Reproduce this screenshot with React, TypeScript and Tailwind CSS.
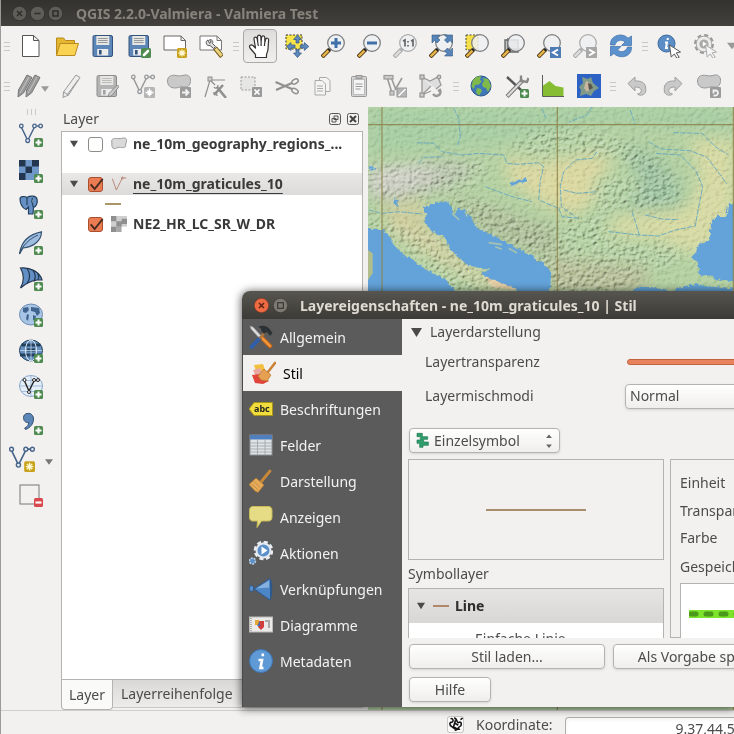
import { useState, type ReactNode } from "react";

function Svg(props: { children: ReactNode; className?: string }) {
  return (
    <svg
      aria-hidden="true"
      className={props.className ?? "h-6 w-6 shrink-0"}
      fill="none"
      viewBox="0 0 24 24"
    >
      {props.children}
    </svg>
  );
}

function PlusBadge() {
  return (
    <g>
      <rect fill="#4f8a4f" height="9" rx="1.5" width="9" x="15" y="15" />
      <path d="M19.5 16.5v6M16.5 19.5h6" stroke="#fff" strokeWidth="2" />
    </g>
  );
}

function StarBadge() {
  return (
    <g transform="translate(14 14)">
      <rect fill="#c9a21c" height="10" rx="1.5" width="10" />
      <path
        d="M5 1.5v7M1.5 5h7M2.5 2.5l5 5M7.5 2.5l-5 5"
        stroke="#fff8d0"
        strokeWidth="1.3"
      />
    </g>
  );
}

function GreyBadge(props: { d: string }) {
  return (
    <g>
      <rect fill="#9b9b9b" height="11" rx="1" width="11" x="13" y="13" />
      <path d={props.d} stroke="#f2f2f2" strokeWidth="1.8" />
    </g>
  );
}

function Lens(props: { grey?: boolean; children?: ReactNode }) {
  return (
    <g>
      <path
        d="M1 23l7.5-7.5"
        stroke={props.grey ? "#a5a5a5" : "#4c3a18"}
        strokeWidth="4.2"
      />
      <path
        d="M1.7 22.3l6-6"
        stroke={props.grey ? "#dcdcdc" : "#e9b548"}
        strokeWidth="2.4"
      />
      <path
        d="M7.5 16.5l2.5-2.5"
        stroke={props.grey ? "#b0b0b0" : "#222"}
        strokeWidth="3"
      />
      <circle
        cx="15"
        cy="9"
        fill="#eef0f2"
        fillOpacity="0.85"
        r="8.3"
        stroke={props.grey ? "#a9a9a9" : "#77797c"}
        strokeWidth="1.2"
      />
      {props.children}
    </g>
  );
}

function Floppy(props: { grey?: boolean }) {
  return (
    <g>
      <rect
        fill={props.grey ? "#b4b4b4" : "#5d86b8"}
        height="21"
        rx="1.5"
        stroke={props.grey ? "#8d8d8d" : "#34527a"}
        width="19.5"
        x="2"
        y="1.5"
      />
      <rect fill="#e6e6e2" height="9" width="13" x="5.3" y="2" />
      <path
        d="M7 4.5h9.6M7 6.5h9.6M7 8.5h9.6"
        stroke={props.grey ? "#b5b5b5" : "#8b8f94"}
        strokeWidth="0.9"
      />
      <rect fill="#ececec" height="6.5" width="11" x="6.2" y="15" />
      <rect
        fill={props.grey ? "#a2a2a2" : "#34527a"}
        height="4.5"
        width="2.6"
        x="8"
        y="16"
      />
    </g>
  );
}

function VectorNodes(props: { color: string }) {
  return (
    <g stroke={props.color} strokeWidth="1.5">
      <path d="M2.5 4.5l6 12.5M9 17l6.2-12.5M17.5 2.9h3" />
      <g fill="#e9eef4" strokeWidth="1.3">
        <circle cx="2.3" cy="3" r="1.8" />
        <circle cx="8.7" cy="17.6" r="1.9" />
        <circle cx="15.5" cy="3" r="1.8" />
        <circle cx="21.6" cy="3" r="1.8" />
      </g>
    </g>
  );
}

const BEAN =
  "M.5 7C.5 2 5 .5 9 1.500c4 1 6 0 9-.5 4-.5 6 3 5.500 6.500-.5 4-3 6-6.500 5.500-4-1-5 1-9 1-4.500 0-7.500-2.500-7.500-7z";

const GREY = "#999";

const fileIcons: [string, ReactNode][] = [
  [
    "Neu",
    <path
      d="M3.5 1.5h11l5.5 5v16H3.5zM14.5 1.5v5H20"
      fill="#fff"
      stroke="#555"
    />,
  ],
  [
    "Öffnen",
    <g stroke="#b98a1d" strokeLinejoin="round">
      <path d="M1.5 21V4h7l2 2.5h9V12" fill="#e5b731" />
      <path d="M1.5 21.5l3.5-12h18.5l-3.7 12z" fill="#fbd352" />
    </g>,
  ],
  ["Speichern", <Floppy />],
  [
    "Speichern als",
    <g>
      <Floppy />
      <rect fill="#4f8a4f" height="10" rx="1.5" width="10" x="14" y="14" />
      <path d="M17 21l4-4" stroke="#fff" strokeLinecap="round" strokeWidth="2.6" />
    </g>,
  ],
  [
    "Neue Druckzusammenstellung",
    <g>
      <path d="M1 2h17l4.5 4.5V16H1zM18 2v4.5h4.5" fill="#fff" stroke="#666" />
      <StarBadge />
    </g>,
  ],
  [
    "Druckzusammenstellungen",
    <g>
      <path d="M1 2h17l4.5 4.5V16H1zM18 2v4.5h4.5" fill="#fff" stroke="#777" />
      <path
        d="M9 6c-3.500 1.500-1.500 6.500 2 5.500l3.500 3 2-2-3-3c1-2.500-1-4.500-3-3.700l1.700 2.200-1.500 1.500z"
        fill="#ddd"
        stroke="#444"
        strokeWidth="0.9"
      />
      <path d="M16 14l7 8.500" stroke="#6a5318" strokeWidth="4.8" />
      <path d="M16.6 14.6l6 7.200" stroke="#ecd47c" strokeWidth="3" />
    </g>,
  ],
];

const navIcons: [string, ReactNode][] = [
  [
    "Karte verschieben",
    <path
      d="M7.500 23.500v-3L2 14c-1.500-2.500 1-4 3-2.500L7.500 14 6 5c-.3-2.300 2.600-2.700 3.100-.5L9.700 8 9.500 3c0-2.500 3.100-2.500 3.300 0l.3 5 .5-4.500c.2-2.200 3.200-2 3.200.2V8.500l.8-3c.5-2 3.200-1.500 3 .5L20 15c-.1 2.500-1 3.500-1.500 5.500v3zM9.700 8l.6 4M13.100 8v4M16.800 8.500l-.4 3.500"
      fill="#fff"
      stroke="#333"
      strokeLinejoin="round"
      strokeWidth="1.2"
    />,
  ],
  [
    "Auswahl verschieben",
    <g>
      <rect fill="#f8e54a" height="14" stroke="#333" strokeDasharray="2 1.5" width="16" x="1" y="1" />
      <path
        d="M12.5 1l4 4.5H14V9h-3V5.5H8.5zM12.5 23.5l4-4.5H14v-3.5h-3V19H8.5zM1.5 12.5l4.5-4V11h4v3H6v2.5zM23.8 12.5l-4.5-4V11h-4v3h4v2.5z"
        fill="#5d89bd"
        stroke="#2f5582"
        strokeWidth="0.7"
      />
    </g>,
  ],
  [
    "Hineinzoomen",
    <Lens>
      <path d="M15 4v10M10 9h10" stroke="#3f70aa" strokeWidth="3" />
    </Lens>,
  ],
  [
    "Hinauszoomen",
    <Lens>
      <path d="M10 9h10" stroke="#3f70aa" strokeWidth="3" />
    </Lens>,
  ],
  [
    "Zoom 1:1",
    <Lens grey>
      <path
        d="M10 7l2-1v6.5M18 7l2-1v6.5M15 7v1.5M15 11v1.5"
        stroke="#666"
        strokeWidth="1.7"
      />
    </Lens>,
  ],
  [
    "Volle Ausdehnung",
    <g>
      <Lens />
      <path
        d="M3 1h8L8.5 3.5 11 6 8 9 5.5 6.5 3 9zM23.5 1h-8L18 3.5 15.5 6l3 3L21 6.5 23.5 9zM23.5 22h-8l2.5-2.5-2.5-2.5 3-3 2.5 2.5 2.5-2.5z"
        fill="#5784b8"
        stroke="#34597f"
        strokeWidth="0.6"
      />
    </g>,
  ],
  [
    "Zur Auswahl zoomen",
    <g>
      <rect fill="#f6e04a" height="15" stroke="#444" strokeDasharray="2 1.5" width="12" x="1" y="1" />
      <Lens />
    </g>,
  ],
  [
    "Auf den Layer zoomen",
    <g>
      <path d="M4 6v12h13V6zM7 4v11h13" fill="#c4c4c2" stroke="#666" strokeWidth="1.4" />
      <Lens />
    </g>,
  ],
  [
    "Zoom zurück",
    <g>
      <Lens />
      <rect fill="#4d7db4" height="11" width="11" x="13" y="13" />
      <path d="M21 15.5l-5 3 5 3" stroke="#fff" strokeWidth="2" />
    </g>,
  ],
  [
    "Zoom vor",
    <g>
      <Lens grey />
      <rect fill="#a8a8a8" height="11" width="11" x="13" y="13" />
      <path d="M16 15.5l5 3-5 3" stroke="#fff" strokeWidth="2" />
    </g>,
  ],
  [
    "Aktualisieren",
    <g fill="#5b92cd" stroke="#3c6fa8" strokeWidth="0.7">
      <path d="M1.5 11C1 4 7 .8 12 1c3 .2 5.5 1.5 7 3.2L22.5 2v9.5h-10L16 8C12 4.5 7 7 6 11z" />
      <path d="M22.500 13c.5 7-5.500 10.200-10.500 9.700-3-.2-5.500-1.500-7-3.200L1.500 22v-9.500H12L8.500 16c4 3.500 9 1 10-3z" />
    </g>,
  ],
];

const CURSOR = "M12.5 11l11 7-4.3.9 3 4.3-2.2 1.3-2.7-4.5-3.1 3z";

const infoIcons: [string, ReactNode][] = [
  [
    "Objekte abfragen",
    <g>
      <circle cx="9.5" cy="9.5" fill="#5b8dc6" r="8.5" stroke="#3c6798" />
      <path d="M10.7 4v2M8 8.5h2L9 14h2" stroke="#fff" strokeWidth="2" />
      <path d={CURSOR} fill="#fff" stroke="#555" />
    </g>,
  ],
  [
    "Objektaktion ausführen",
    <g>
      <circle cx="11" cy="10" r="8.8" stroke="#999" strokeDasharray="4 2.9" strokeWidth="2.4" />
      <circle cx="11" cy="10" fill="#ececea" r="7.8" stroke="#aaa" />
      <circle cx="11" cy="10" fill="#aaa" r="4.6" />
      <path d="M9.8 7.5l4 2.5-4 2.5z" fill="#fff" />
      <path d={CURSOR} fill="#f4f4f4" stroke="#aaa" />
    </g>,
  ],
];

const editIcons: [string, ReactNode][] = [
  [
    "Bearbeitungsstatus umschalten",
    <g fill="#eee" stroke={GREY}>
      <path d="M17 1l4 2.5L9.5 21 4 23.5 4.5 18zM4.5 18l5 3M19 6L8 21" />
    </g>,
  ],
  [
    "Layeränderungen speichern",
    <g>
      <Floppy grey />
      <path d="M22.5 11l1.5 1.5-7 9-3.5 1.5.5-3.5z" fill="#ccc" stroke="#888" />
    </g>,
  ],
  [
    "Objekt hinzufügen",
    <g>
      <VectorNodes color={GREY} />
      <rect fill="#b5b5b5" height="11" rx="1.5" width="11" x="13" y="13" />
      <path
        d="M18.5 14.5v8M14.5 18.5h8M16.5 16.5l4 4M20.5 16.5l-4 4"
        stroke="#fff"
        strokeWidth="1.3"
      />
    </g>,
  ],
  [
    "Objekte verschieben",
    <g>
      <path d={BEAN} fill="#c9c9c9" stroke={GREY} />
      <GreyBadge d="M15 18.5h6M18.5 15.5l3 3-3 3" />
    </g>,
  ],
  [
    "Knotenwerkzeug",
    <g stroke="#8f8f8f">
      <path d="M2 23L7 6h15M7 6l5 5" strokeWidth="1.2" />
      <rect fill="#ccc" height="4" width="4" x="5" y="3" />
      <path d="M11 21l9-10M14 13l9 11" strokeWidth="2.6" />
      <path d="M11 13c1 2 4 1 4-2M10 19c2-1 4 0 4 3" strokeWidth="1.3" />
    </g>,
  ],
  [
    "Ausgewähltes löschen",
    <g>
      <rect fill="#e6e6e4" height="13" stroke="#999" strokeDasharray="2 1.5" width="14" x="2" y="3" />
      <rect fill="#999" height="10" rx="1" width="10" x="13" y="13" />
      <path d="M15.5 15.5l5 5M20.5 15.5l-5 5" stroke="#fff" strokeWidth="1.7" />
    </g>,
  ],
  [
    "Ausschneiden",
    <g stroke="#909090" strokeWidth="1.5">
      <path d="M.5 8L17 15M1 16L17 9" strokeWidth="2.200" />
      <ellipse cx="20" cy="7.5" rx="3.4" ry="2.2" transform="rotate(-30 20 7.5)" />
      <ellipse cx="20" cy="17" rx="3.4" ry="2.2" transform="rotate(30 20 17)" />
    </g>,
  ],
  [
    "Kopieren",
    <g fill="#f4f4f2" stroke="#aaa">
      <path d="M8.5 3.5h7l3.5 3v11H8.5z" />
      <path d="M4 6.5h7l3.5 3.5v11H4zM6 12h6M6 14.5h6M6 17h6" />
    </g>,
  ],
  [
    "Einfügen",
    <g stroke="#999">
      <rect fill="#d4d4d4" height="20" rx="1" width="15" x="4.5" y="2.5" />
      <rect fill="#f5f5f5" height="15" stroke="#bbb" width="11" x="6.5" y="5.5" />
      <rect fill="#bbb" height="3" width="6" x="9" y="1.5" />
      <path d="M8.5 10h7M8.5 12.5h7M8.5 15h5" />
    </g>,
  ],
  [
    "Objekt vereinfachen",
    <g stroke="#999" strokeWidth="1.2">
      <path d="M4 3l5 16M12 16l7-12M8 3l5 13" strokeWidth="1.6" />
      <rect fill="#ccc" height="3.5" width="9" x="1" y="1.5" />
      <rect fill="#ccc" height="4" width="4" x="7" y="17" />
      <rect fill="#b5b5b5" height="9" rx="1" width="10" x="14" y="14" />
      <path d="M15.5 22l7-7" stroke="#fff" />
    </g>,
  ],
  [
    "Ring hinzufügen",
    <g stroke="#999" strokeWidth="1.3">
      <path d="M3 3l8 4 8-4 3 8-5 4M3 3v18l9-9M3 21l9-4" fill="#dedede" />
      <path d="M14 20c3 4 9 1 7-4l-2 1" strokeWidth="2.4" />
      <rect fill="#ccc" height="4" width="4" x="1" y="1" />
      <rect fill="#ccc" height="4" width="4" x="1" y="19" />
      <circle cx="20" cy="3" fill="#ccc" r="1.8" />
    </g>,
  ],
];

const pluginIcons: [string, ReactNode][] = [
  [
    "Globus",
    <g>
      <circle cx="12" cy="12" fill="#3f78b9" r="10" stroke="#2c5687" />
      <path
        d="M4 6c3-3.5 6-4 8-3.5L11 6l2 1-3 3.5-4 .5-1 4-2.5-2.5zM14 4l5 1 3 7-3 6-2-4-3-1-1-3 2-3zM8 14l4 1 1 2-3 4.5-3-3z"
        fill="#7fb94b"
      />
    </g>,
  ],
  [
    "Werkzeuge",
    <g>
      <path d="M2 3l14 13" stroke="#555" strokeWidth="2.4" />
      <path d="M2 22.5L18 6" stroke="#777" strokeWidth="4" />
      <path d="M2.5 22L17 7" stroke="#ddd" strokeWidth="2" />
      <path d="M16 1.5V7l6 1 1.5-4" stroke="#888" strokeWidth="2.4" />
      <PlusBadge />
    </g>,
  ],
  [
    "Höhenprofil",
    <g>
      <path d="M1.5 22V12l7-5 6 5 8 1.5V22z" fill="#86bd32" />
      <path d="M1.5 1v21.5H23" stroke="#5c5c5c" />
    </g>,
  ],
  [
    "Raster",
    <g>
      <rect fill="#2b62c4" height="24" width="24" />
      <path d="M5 3l6 2 3-2 2 6 6 5-5 3-3 5-5-2-6 2 1-6-2-3 4-4z" fill="#7f9a88" />
      <path d="M9 7l4 2 1 5-4 4-3-4z" fill="#c9b7a2" />
      <path d="M11 9l3 1 2 4-4 2z" fill="#5a5348" />
    </g>,
  ],
];

const undoIcons: [string, ReactNode][] = [
  [
    "Rückgängig",
    <path
      d="M3 9.5L10 3v4c8-.5 12 3 10.5 11.5-2 3-6 3.5-8 1.5 5-.5 6-7-2.5-7v4z"
      fill="#c9c9c9"
      stroke="#a0a0a0"
    />,
  ],
  [
    "Wiederholen",
    <path
      d="M21 9.5L14 3v4C6 6.5 2 10 3.5 18.5c2 3 6 3.5 8 1.5-5-.5-6-7 2.5-7v4z"
      fill="#c9c9c9"
      stroke="#a0a0a0"
    />,
  ],
  [
    "Objekt drehen",
    <g>
      <path d={BEAN} fill="#c9c9c9" stroke={GREY} />
      <GreyBadge d="M16.5 21.5c5 1 6-5 2-5h-2v3" />
    </g>,
  ],
];

const layerTools: [string, ReactNode][] = [
  [
    "Vektorlayer hinzufügen",
    <g>
      <VectorNodes color="#47648a" />
      <PlusBadge />
    </g>,
  ],
  [
    "Rasterlayer hinzufügen",
    <g>
      <rect fill="#6f98c8" height="20" width="20" y="1" />
      <path
        d="M0 1h6.5v6.5H0zM13 1h7v6.5h-7zM6.5 7.5H13V14H6.5zM0 14h6.5v7H0z"
        fill="#23364f"
      />
      <PlusBadge />
    </g>,
  ],
  [
    "PostGIS-Layer hinzufügen",
    <g>
      <path
        d="M1 4c0-3 5-3 7-1.5C11 .5 17 .5 18 4c1 4-1 8-3.5 8.5L14 19H9.5v-7L7 14.500C3 13 1 8 1 4zM8 3v7M13.5 3c-2 4 1 6 .5 9"
        fill="#6690c4"
        stroke="#24415f"
        strokeWidth="1.2"
      />
      <PlusBadge />
    </g>,
  ],
  [
    "SpatiaLite-Layer hinzufügen",
    <g>
      <path
        d="M.5 23C2 12 8 3.5 22.5.8 22.5 10 14 16 4 17z"
        fill="#9dbce0"
        stroke="#34516f"
        strokeWidth="1.2"
      />
      <path d="M.5 23C4 14 10 8 19 4" stroke="#34516f" />
      <PlusBadge />
    </g>,
  ],
  [
    "MSSQL-Layer hinzufügen",
    <g>
      <path
        d="M1.5 1C11 0 21 5 23 13h-5c-6 1-12 4-16.500 8 4-7 4-13 0-20z"
        fill="#628fc6"
        stroke="#23364f"
        strokeWidth="1.2"
      />
      <path
        d="M8 1.5c4 5 3 11 0 15M14 3.5c3 4 3 7 1 11M19 7c1 2 1 4 0 6"
        stroke="#23364f"
        strokeWidth="1.2"
      />
      <PlusBadge />
    </g>,
  ],
  [
    "WMS-Layer hinzufügen",
    <g>
      <ellipse cx="12" cy="11.5" fill="#a9c5e6" rx="11.5" ry="10.5" stroke="#6d8db3" />
      <path
        d="M4 5l5-1 1 3-3 3-3-1zM12 4l8 1 1 5-3 3-2-4-4-1zM8 11l2 1-1 6-2-2zM14 12l3 1-1 5-2-1z"
        fill="#41648f"
      />
      <PlusBadge />
    </g>,
  ],
  [
    "WCS-Layer hinzufügen",
    <g>
      <ellipse cx="12" cy="11.5" fill="#6690bf" rx="11.5" ry="10.5" stroke="#23405e" />
      <path d="M2.5 6h19M1 16h21M8 11h8" stroke="#23405e" strokeWidth="2.8" />
      <path d="M1 11.5h22M12 1v21" stroke="#c6d8ec" strokeWidth="0.8" />
      <ellipse cx="12" cy="11.5" rx="5.5" ry="10.5" stroke="#e4edf6" />
      <PlusBadge />
    </g>,
  ],
  [
    "WFS-Layer hinzufügen",
    <g>
      <ellipse cx="12" cy="11" fill="#e6eef7" rx="11.5" ry="10.5" stroke="#88a6cb" />
      <path d="M1 11h22M3 5.5h18M3 16.5h18M12 .5v21" stroke="#a3bddb" />
      <path d="M5.5 6l4.5 10M10 16l5-10M15 5.500h3" stroke="#222" strokeWidth="1.4" />
      <g fill="#fff" stroke="#222">
        <circle cx="5.5" cy="5" r="1.5" />
        <circle cx="10" cy="17" r="1.5" />
        <circle cx="15" cy="5" r="1.5" />
        <circle cx="19" cy="5" r="1.5" />
      </g>
      <PlusBadge />
    </g>,
  ],
  [
    "Textdateilayer hinzufügen",
    <g>
      <path
        d="M4.5 6.5c0-5.5 10-6 10 1.5 0 5-3.5 9-8 10.5L5.700 17c3-1.500 4-3.500 4-5.500-3 .5-5.200-1.500-5.200-5z"
        fill="#5c86b8"
        stroke="#34516f"
      />
      <PlusBadge />
    </g>,
  ],
];

function Grip(props: { vertical?: boolean }) {
  return (
    <span
      aria-hidden="true"
      className={
        props.vertical
          ? "flex h-[11px] shrink-0 items-center justify-center gap-[3px]"
          : "flex w-3.5 shrink-0 flex-col items-center justify-center gap-[3px]"
      }
    >
      {[0, 1, 2].map((n) => (
        <span
          className={props.vertical ? "h-1.5 w-px bg-[#c9c8c5]" : "h-px w-1.5 bg-[#c9c8c5]"}
          key={n}
        />
      ))}
    </span>
  );
}

function ToolButtons(props: { items: [string, ReactNode][]; active?: string }) {
  return props.items.map(([label, icon]) => (
    <button
      aria-label={label}
      className={
        label === props.active
          ? "mr-0.5 flex h-[34px] w-[34px] shrink-0 items-center justify-center rounded border border-[#aaa9a5] bg-gradient-to-b from-[#dedddb] to-[#f0efed]"
          : "flex h-9 w-9 shrink-0 items-center justify-center rounded"
      }
      key={label}
      type="button"
    >
      <Svg>{icon}</Svg>
    </button>
  ));
}

function Toolbars() {
  return (
    <div className="flex h-20 shrink-0 flex-col overflow-hidden">
      <div className="flex h-10 items-center">
        <span className="flex w-3 shrink-0 justify-center">
          <Grip />
        </span>
        <ToolButtons items={fileIcons} />
        <Grip />
        <ToolButtons active="Karte verschieben" items={navIcons} />
        <span className="flex w-3 shrink-0 justify-center">
          <Grip />
        </span>
        <ToolButtons items={infoIcons} />
        <Svg className="ml-1 h-2.5 w-2.5 shrink-0">
          <path d="M0 4h24L12 20z" fill="#999" />
        </Svg>
      </div>
      <div className="flex h-10 items-center">
        <span className="flex w-3 shrink-0 justify-center">
          <Grip />
        </span>
        <button
          aria-label="Aktuelle Änderungen"
          className="flex h-9 w-10 shrink-0 items-center justify-center"
          type="button"
        >
          <Svg>
            <path
              d="M10 1l5 2.5L6.500 19 1 23l.5-7zM18 1l5 2.5L14.500 19 9 23l.5-7z"
              fill="#9a9a9a"
              stroke="#777"
            />
            <path d="M12 3L3 19M20 3l-9 16" stroke="#c4c4c4" />
          </Svg>
          <Svg className="mt-1.5 h-2 w-2 shrink-0">
            <path d="M0 4h24L12 20z" fill="#999" />
          </Svg>
        </button>
        <ToolButtons items={editIcons} />
        <Grip />
        <ToolButtons items={pluginIcons} />
        <span className="flex w-3 shrink-0 justify-center">
          <Grip />
        </span>
        <ToolButtons items={undoIcons} />
      </div>
    </div>
  );
}

function LayerToolbar() {
  return (
    <div className="flex w-[60px] shrink-0 flex-col items-center">
      <Grip vertical />
      <ToolButtons items={layerTools} />
      <button
        aria-label="Neuer Shapedatei-Layer"
        className="flex h-9 w-full shrink-0 items-center gap-2.5 pl-2"
        type="button"
      >
        <Svg className="h-[26px] w-[26px] shrink-0">
          <VectorNodes color="#47648a" />
          <StarBadge />
        </Svg>
        <Svg className="mt-1.5 h-2 w-2 shrink-0">
          <path d="M0 4h24L12 20z" fill="#777" />
        </Svg>
      </button>
      <ToolButtons
        items={[
          [
            "Layer entfernen",
            <g>
              <rect fill="#f2f1ef" height="19" stroke="#777" width="19" x="1" y="2" />
              <rect fill="#d9484c" height="9" rx="1.5" width="9" x="15" y="15" />
              <path d="M16.5 19.5h6" stroke="#fff" strokeWidth="2.2" />
            </g>,
          ],
        ]}
      />
    </div>
  );
}

function TreeArrow(props: { className: string }) {
  return (
    <Svg className={props.className}>
      <path d="M0 2h24L12 22z" fill="#4a4a4a" />
    </Svg>
  );
}

function LayerRow(props: {
  name: string;
  defaultChecked: boolean;
  expandable?: boolean;
  selected?: boolean;
  icon: ReactNode;
}) {
  const [checked, setChecked] = useState(props.defaultChecked);

  return (
    <div
      className={
        props.selected
          ? "flex h-[22px] items-center bg-gradient-to-b from-[#e9e8e7] to-[#dcdbda] pl-2"
          : "flex h-[22px] items-center pl-2"
      }
    >
      <span className="w-[18px] shrink-0">
        {props.expandable && <TreeArrow className="h-2 w-2" />}
      </span>
      <label className="flex min-w-0 items-center">
        <span className="relative flex shrink-0">
          <input
            checked={checked}
            className="h-[15px] w-[15px] appearance-none rounded-[3px] border border-[#8d8c89] bg-white checked:border-[#a8502e] checked:bg-[#ea7b52]"
            onChange={(event) => setChecked(event.target.checked)}
            type="checkbox"
          />
          {checked && (
            <Svg className="pointer-events-none absolute left-0 top-0 h-4 w-4">
              <path d="M4 11l6 7L22 3" stroke="#4a2c20" strokeWidth="3" />
            </Svg>
          )}
        </span>
        <Svg className="ml-2 mr-1.5 h-4 w-4 shrink-0">{props.icon}</Svg>
        <span
          className={
            props.selected
              ? "whitespace-nowrap text-[14px] font-bold leading-5 text-[#3a3a3a] underline underline-offset-4"
              : "whitespace-nowrap text-[14px] font-bold leading-5 text-[#3a3a3a]"
          }
        >
          {props.name}
        </span>
      </label>
    </div>
  );
}

function LayerPanel() {
  return (
    <section className="flex w-[302px] shrink-0 flex-col">
      <header className="flex h-[25px] items-center gap-1 pl-0.5 pr-0.5 text-[14px]">
        <h2 className="flex-1">Layer</h2>
        <button aria-label="Lösen" className="h-3 w-3.5" type="button">
          <Svg className="h-3 w-3">
            <rect height="22" rx="4" stroke="#555" strokeWidth="2" width="22" x="1" y="1" />
            <path d="M10 6h8v7h-8zM6 11h8v7H6z" fill="#f2f1f0" stroke="#555" strokeWidth="2" />
          </Svg>
        </button>
        <button aria-label="Schließen" className="h-3 w-3.5" type="button">
          <Svg className="h-3 w-3">
            <rect height="22" rx="4" stroke="#555" strokeWidth="2" width="22" x="1" y="1" />
            <path d="M6 6l12 12M18 6L6 18" stroke="#444" strokeWidth="4" />
          </Svg>
        </button>
      </header>
      <div className="flex flex-1 flex-col border border-[#b4b3b0] bg-white pt-px">
        <LayerRow
          defaultChecked={false}
          expandable
          icon={
            <path
              d="M1 7c2-5 6-3 11-3s9-3 11 1-2 6-1 9-3 4-8 3-8 4-11 1-1-6-2-11z"
              fill="#dadada"
              stroke="#999"
              strokeWidth="1.5"
            />
          }
          name="ne_10m_geography_regions_..."
        />
        <div className="h-[18px]" />
        <LayerRow
          defaultChecked
          expandable
          icon={
            <g stroke="#b98a7b" strokeWidth="1.5">
              <path d="M2 4l6 17L17 3h6" />
              <circle cx="17" cy="3" r="1.5" />
            </g>
          }
          name="ne_10m_graticules_10"
          selected
        />
        <div className="flex h-[18px] items-center pl-[43px]">
          <span className="h-[2px] w-4 bg-[#a89668]" />
        </div>
        <LayerRow
          defaultChecked
          icon={
            <g>
              <rect fill="#cfcfcf" height="24" width="24" />
              <path d="M0 0h8v8H0zM16 4h8v8h-8zM8 8h8v8H8zM0 16h8v8H0z" fill="#8f8f8f" />
              <path d="M8 16h8v8H8z" fill="#a8a8a8" />
              <path d="M16 16h8v8h-8z" fill="#fff" />
            </g>
          }
          name="NE2_HR_LC_SR_W_DR"
        />
      </div>
      <div className="flex h-[30px] shrink-0 items-start text-[14px]" role="tablist">
        <button
          aria-selected="true"
          className="h-[30px] w-[52px] rounded-b border border-t-0 border-[#b4b3b0] bg-[#fafaf9]"
          role="tab"
          type="button"
        >
          Layer
        </button>
        <button
          aria-selected="false"
          className="h-7 flex-1 border-b border-[#c9c8c5] bg-gradient-to-b from-[#d9d8d6] to-[#edecea] pl-2 text-left"
          role="tab"
          type="button"
        >
          Layerreihenfolge
        </button>
      </div>
    </section>
  );
}

const ADRIATIC =
  "M180 318L200 310 250 298 262 312 270 340 282 320 300 325 320 350 335 375 380 398 430 425 490 455 545 490 565 510 560 575 560 700H480L482 575 430 550 350 515 382 505 310 490 262 445 245 410 200 385 180 360 190 340z";
const TYRRHENIAN =
  "M-30 380L60 385 75 400 95 435 130 465 190 505 240 530 270 560 280 600V700H-30z";
const BLACK_SEA =
  "M1150 295L1095 310 1090 345 1060 345 1045 360 1038 415 1005 435 987 465 1005 490 1010 520 1060 535 1150 545z";
const AEGEAN =
  "M800 576l30-22 60 6 40 10 50-22 80 8 56 8V700H790z";

const RIVERS = [
  "M20 330L60 340 110 335 180 342",
  "M165 128L215 130 240 155 300 165 350 160 425 165 435 190 465 193 530 188 545 200 535 240 530 300 590 325 600 350 650 355",
  "M275 25L290 55 295 110 285 140",
  "M540 25l12 30M690 20l-15 25-55 22M805 30l15 45",
  "M170 190l15-18 60-2",
  "M705 155L690 175 640 180 605 215 595 260 598 320 640 350",
  "M605 270l40 10 60-5",
  "M740 395L830 405 890 408 940 390 1000 378 1010 320 1022 260 1000 210 955 165 880 160",
  "M810 335l10 30 12 40",
  "M935 98L1020 100 1060 140 1100 165",
  "M860 125l35 22 90 5 50 20 30 40 30 40",
  "M850 345l50 12 50 2M370 260l80 30 60 15",
];

function MapCanvas() {
  return (
    <svg
      aria-label="Karte"
      className="h-full w-full"
      preserveAspectRatio="xMinYMin slice"
      role="img"
      viewBox="18 21 1098 1809"
    >
      <defs>
        <filter
          colorInterpolationFilters="sRGB"
          height="100%"
          id="relief"
          width="100%"
          x="0"
          y="0"
        >
          <feTurbulence baseFrequency="0.075 0.085" numOctaves="3" seed="8" type="fractalNoise" />
          <feColorMatrix values="0 0 0 0 0  0 0 0 0 0  0 0 0 0 0  1 0 0 0 0" />
          <feDiffuseLighting diffuseConstant="0.73" lightingColor="#ffffff" surfaceScale="3">
            <feDistantLight azimuth="225" elevation="45" />
          </feDiffuseLighting>
        </filter>
        <filter height="160%" id="soft" width="160%" x="-30%" y="-30%">
          <feGaussianBlur stdDeviation="22" />
        </filter>
        <filter height="160%" id="feather" width="160%" x="-30%" y="-30%">
          <feGaussianBlur stdDeviation="14" />
        </filter>
        <filter height="110%" id="coast" width="110%" x="-5%" y="-5%">
          <feTurbulence baseFrequency="0.05" numOctaves="2" seed="3" />
          <feDisplacementMap
            in="SourceGraphic"
            scale="16"
            xChannelSelector="R"
            yChannelSelector="G"
          />
        </filter>
        <mask id="peaks">
          <rect fill="#4a4a4a" height="1809" width="1098" x="18" y="21" />
          <g fill="#fff" filter="url(#feather)">
            <path d="M18 210L120 190 240 185 370 185 380 215 330 260 240 280 110 300 18 290z" />
            <path d="M250 280L360 300 480 350 590 390 620 340 720 360 760 420 980 440 960 480 800 540 760 600H580L500 460 350 390 270 310z" />
            <path d="M440 140L520 90 680 90 790 120 880 170 945 230 960 300 900 325 760 325 690 350 700 240 790 230 850 230 760 170 640 150 560 180z" />
            <path d="M18 350L90 370 230 410 300 480 400 540 380 580H290L180 500 80 400 18 380z" />
          </g>
        </mask>
      </defs>
      <rect fill="#b5d2a3" height="1809" width="1098" x="18" y="21" />
      <g filter="url(#soft)">
        <path d="M18 21H1116V90L700 70 400 130 18 160z" fill="#a9cfa5" />
        <path d="M530 190L700 160 760 190 690 250 700 300 640 345 540 310 440 240 430 170z" fill="#dcd9a2" />
        <path d="M980 120h136v220l-100 130-120-50-160-20 20-50 220-20 40-100z" fill="#d8dba4" />
        <path d="M60 310l130-10v60l70 80 60 50 170 90h-80L220 480 80 390z" fill="#cfcf9f" />
        <path d="M18 210L240 190 370 200 230 270 90 300 18 290z" fill="#b9c2ae" />
        <path d="M250 280L480 350 590 390 580 480 500 460 350 390z" fill="#aebf99" />
        <path d="M780 120l120 60 70 100-40 50H760l80-60z" fill="#9fc4a0" />
        <path d="M560 470l300 30v80H560z" fill="#b7bf98" />
      </g>
      <path d="M390 560l-30-45 60 20 70 40z" fill="#e5cfa4" />
      <g className="mix-blend-hard-light" mask="url(#peaks)">
        <rect filter="url(#relief)" height="640" width="1098" x="18" y="21" />
      </g>
      <path
        d="M18 215L110 200 230 205 200 240 90 280 18 270z"
        fill="#f4e9ee"
        filter="url(#soft)"
        opacity="0.4"
      />
      <g fill="none" stroke="#6fadbd" strokeDasharray="16 4" strokeWidth="3">
        {RIVERS.map((d) => (
          <path d={d} key={d} />
        ))}
      </g>
      <g fill="#63a3d9" filter="url(#coast)">
        <path d={ADRIATIC} />
        <path d={TYRRHENIAN} />
        <path d={BLACK_SEA} />
        <path d={AEGEAN} />
        <path d="M440 245l45-14 8 6-50 16zM18 192l22 10-6 8-16-6zM90 292l14 4-4 20z" />
      </g>
      <path d="M18 450l14 10v60l-14 20z" fill="#b2bd8c" />
      <path
        d="M380 428l40 6M440 445l25 14M270 340l22 20M400 440l20 8"
        fill="none"
        stroke="#a5c2b0"
        strokeWidth="5"
      />
      <path
        d="M18 74H1116M60 21V1830M586 21V1830M1114 21V1830"
        fill="none"
        stroke="#8d8146"
        strokeOpacity="0.85"
        strokeWidth="3.5"
      />
    </svg>
  );
}

const pages: [string, ReactNode][] = [
  [
    "Allgemein",
    <g>
      <path d="M1 1l3 1 10 11-2 2L2 4z" fill="#dcdcdc" stroke="#999" strokeWidth="0.6" />
      <path d="M13 13l8 8" stroke="#c9671d" strokeLinecap="round" strokeWidth="4.5" />
      <path d="M13 13l8 8" stroke="#f39b3d" strokeLinecap="round" strokeWidth="2" />
      <path d="M2.5 22l8-8.500" stroke="#2f5fa8" strokeLinecap="round" strokeWidth="4" />
      <path d="M10.500 13.500L17 6" stroke="#b5763a" strokeWidth="2.4" />
      <path d="M9 2c5-3 11-1 14.500 6l-2.500 3-3-4-3 2-3-3.500c1-1 0-2.500-3-3.500z" fill="#2b3135" />
    </g>,
  ],
  [
    "Stil",
    <g>
      <path d="M2 4l9-1 4 12-9 2z" fill="#f3c03d" />
      <path d="M1 9l7-2 4 7-8 2z" fill="#e9a7a0" />
      <path d="M0 14l8-1 9 7-6 3-8-1z" fill="#e0443a" />
      <path d="M23 2l-7 9" stroke="#c98236" strokeLinecap="round" strokeWidth="2.6" />
      <path d="M12 8l7 6-4 6-6-1-3-4z" fill="#e6a052" stroke="#b8752a" strokeWidth="0.7" />
    </g>,
  ],
  [
    "Beschriftungen",
    <g>
      <path d="M0 12l5-6.5h18.5v13H5z" fill="#f0dc3c" stroke="#a89419" />
      <text
        fill="#222"
        fontFamily="Noto Sans, sans-serif"
        fontSize="9"
        fontWeight="700"
        x="5"
        y="15"
      >
        abc
      </text>
    </g>,
  ],
  [
    "Felder",
    <g>
      <rect fill="#dfe3e6" height="20" stroke="#8b9095" width="22" x="1" y="2" />
      <path d="M1 2h22v4.5H1z" fill="#4f80bd" />
      <path
        d="M1 10h22M1 13h22M1 16h22M1 19h22M8.5 6v16M16 6v16"
        stroke="#a3a9ae"
        strokeWidth="0.9"
      />
    </g>,
  ],
  [
    "Darstellung",
    <g>
      <path d="M21 2l-9 11" stroke="#c98838" strokeLinecap="round" strokeWidth="2.8" />
      <path d="M7 9l8 7-6 7.5L6 22l-6-6.5z" fill="#e5ab5a" stroke="#b17a2e" strokeWidth="0.8" />
      <path d="M3 15l6 6M5 12.5l6 6" stroke="#c08a3c" strokeWidth="0.8" />
    </g>,
  ],
  [
    "Anzeigen",
    <path
      d="M4 1.5h15c3 0 4 1.5 4 4V12c0 3-1.5 4-4 4h-6.5L8 22.5 8.5 16H4c-2.5 0-3.5-1.5-3.5-4V5.500c0-2.500 1-4 3.500-4z"
      fill="#e7dc86"
      stroke="#c9bc57"
    />,
  ],
  [
    "Aktionen",
    <g>
      <circle cx="14.5" cy="9.5" r="8.3" stroke="#e9edf1" strokeDasharray="4 2.5" strokeWidth="3" />
      <circle cx="14.5" cy="9.5" fill="#5b8fca" r="7" stroke="#e4e9ee" strokeWidth="2" />
      <path d="M12.5 5.5l6 4-6 4z" fill="#fff" />
      <circle cx="3.5" cy="20" fill="#5b8fca" r="3" stroke="#bcd" strokeDasharray="2 1" strokeWidth="1.5" />
    </g>,
  ],
  [
    "Verknüpfungen",
    <g>
      <path d="M5 12L21 1.500l1.500 5V17L21 23z" fill="#4d86c6" stroke="#2d588c" />
      <path d="M21 1.500c3 6 3 15 0 21.500" fill="#2d588c" />
      <path d="M7 11.500l13-8v7z" fill="#86b0de" />
      <ellipse cx="2.5" cy="11.5" fill="#5b8fca" rx="2.2" ry="3" stroke="#2d588c" />
    </g>,
  ],
  [
    "Diagramme",
    <g>
      <rect fill="#eceae6" height="15" stroke="#bbb" width="23" x="0.5" y="4" />
      <path d="M2 5v13" stroke="#777" strokeDasharray="1 1" />
      <path d="M6 7h4v5H6z" fill="#e5a83b" />
      <path d="M10 8h5v6l-3 3-3-3z" fill="#d03f3f" />
      <path d="M11 8v5h-3z" fill="#4a6da8" />
      <path d="M16 7h5v2h-5zM19 9h2v6h-2z" fill="#aaa" />
    </g>,
  ],
  [
    "Metadaten",
    <g>
      <circle cx="12" cy="12" fill="#5f9ad6" r="11.5" stroke="#3d74b3" />
      <path d="M13.8 4.5v2.8M9.5 11H13l-1.5 8h3" stroke="#fff" strokeWidth="2.6" />
    </g>,
  ],
];

function DialogSidebar() {
  const [page, setPage] = useState("Stil");

  return (
    <nav className="w-40 shrink-0 border-l border-[#4a4a4a] bg-[#5b5b5b]">
      {pages.map(([name, icon]) => (
        <button
          className={
            name === page
              ? "flex h-9 w-full items-center gap-[7px] bg-[#f2f1f0] pl-[9px] text-[14px] text-black"
              : "flex h-9 w-full items-center gap-[7px] pl-1.5 text-[14px] text-[#f2f2f2]"
          }
          key={name}
          onClick={() => setPage(name)}
          type="button"
        >
          <Svg>{icon}</Svg>
          {name}
        </button>
      ))}
    </nav>
  );
}

const buttonClass =
  "h-[25px] shrink-0 whitespace-nowrap rounded border border-[#b4b3b0] bg-gradient-to-b from-white to-[#efeeec] text-center shadow-sm";

function StylePage() {
  return (
    <div className="flex min-w-0 flex-1 flex-col overflow-hidden pl-1.5 text-[14px] leading-5">
      <h3 className="flex h-[26px] shrink-0 items-center gap-2 pl-[3px]">
        <TreeArrow className="h-[11px] w-[11px]" />
        Layerdarstellung
      </h3>
      <div className="flex h-[34px] shrink-0 items-center pl-[17px]">
        <label className="w-[202px] shrink-0" htmlFor="opacity">
          Layertransparenz
        </label>
        <input
          className="h-1.5 w-[200px] shrink-0 appearance-none rounded-full border border-[#c2603c] bg-[#e8835d] [&::-webkit-slider-thumb]:h-0 [&::-webkit-slider-thumb]:w-0 [&::-webkit-slider-thumb]:appearance-none"
          defaultValue={100}
          id="opacity"
          type="range"
        />
      </div>
      <div className="flex h-[34px] shrink-0 items-center pl-[17px]">
        <label className="w-[200px] shrink-0" htmlFor="blend">
          Layermischmodi
        </label>
        <select
          className="h-[25px] w-[200px] shrink-0 appearance-none rounded border border-[#b4b3b0] bg-gradient-to-b from-white to-[#efeeec] pl-1 shadow-sm"
          id="blend"
        >
          <option>Normal</option>
          <option>Aufhellen</option>
        </select>
      </div>
      <div className="mt-[15px] flex shrink-0 pl-px">
        <div className="relative">
          <select
            aria-label="Darstellungsart"
            className="h-[25px] w-[151px] appearance-none rounded border border-[#b4b3b0] bg-gradient-to-b from-white to-[#efeeec] pl-6 shadow-sm"
          >
            <option>Einzelsymbol</option>
            <option>Kategorisiert</option>
          </select>
          <Svg className="pointer-events-none absolute left-1.5 top-1 h-4 w-4">
            <path
              d="M3 2h8v5h8v4h-6v4h7v5h-8v3H7v-6H3v-5h5V7H3z"
              fill="#2f9e6b"
              stroke="#1d7a4e"
            />
          </Svg>
          <Svg className="pointer-events-none absolute right-1 top-1.5 h-3.5 w-3.5">
            <path d="M7 7l5-6 5 6zM7 18l5 6 5-6z" fill="#666" />
          </Svg>
        </div>
      </div>
      <div className="mt-1.5 flex h-[179px] shrink-0 gap-[6px] overflow-hidden">
        <div className="flex w-[256px] shrink-0 flex-col">
          <div className="flex h-[101px] shrink-0 items-center justify-center border border-[#b4b3b0]">
            <span className="h-[2px] w-[100px] bg-[#a98d6d]" />
          </div>
          <h4 className="h-7 shrink-0 leading-7">Symbollayer</h4>
          <ul className="shrink-0 border border-[#b4b3b0] bg-white">
            <li className="flex h-[34px] items-center bg-gradient-to-b from-[#e6e5e4] to-[#d8d7d6] pl-2 font-bold text-[#2c2c2c]">
              <TreeArrow className="h-2 w-2" />
              <span className="ml-2 mr-1.5 h-[2px] w-4 bg-[#b0876a]" />
              Line
            </li>
            <li className="flex h-8 items-center pl-[44px]">
              <span className="mr-1.5 h-[2px] w-4 bg-[#b0876a]" />
              Einfache Linie
            </li>
          </ul>
        </div>
        <div className="flex w-[300px] shrink-0 flex-col border border-[#b4b3b0] pl-[9px] pt-[9px]">
          <p className="h-7 shrink-0 leading-7">Einheit</p>
          <p className="h-7 shrink-0 leading-7">Transparenz</p>
          <p className="h-[26px] shrink-0 leading-[26px]">Farbe</p>
          <p className="h-8 shrink-0 leading-8">Gespeicherte Stile</p>
          <div className="h-20 shrink-0 border border-[#b4b3b0] bg-white pl-2 pt-[26px]">
            <svg aria-hidden="true" className="h-2 w-full" fill="none">
              <path d="M0 4h300" stroke="#7de32b" strokeWidth="8" />
              <path
                d="M2 4h300"
                stroke="#4c9a1c"
                strokeDasharray="5 10"
                strokeLinecap="round"
                strokeWidth="5"
              />
            </svg>
          </div>
        </div>
      </div>
      <div className="mt-1.5 flex shrink-0 gap-2 pl-px">
        <button className={`${buttonClass} w-[196px]`} type="button">
          Stil laden...
        </button>
        <button className={`${buttonClass} w-[196px]`} type="button">
          Als Vorgabe speichern
        </button>
      </div>
      <div className="mt-2 flex shrink-0 pl-px">
        <button className={`${buttonClass} w-[82px]`} type="button">
          Hilfe
        </button>
      </div>
    </div>
  );
}

function LayerPropertiesDialog() {
  return (
    <div
      aria-labelledby="dialog-title"
      className="absolute left-[241px] right-0 top-[291px] flex h-[416px] flex-col overflow-hidden rounded-tl-lg bg-[#f2f1f0] shadow-[0_1px_8px_1px_rgba(0,0,0,0.6)]"
      role="dialog"
    >
      <header className="flex h-7 shrink-0 items-center gap-1 bg-gradient-to-b from-[#56554f] to-[#3c3b37] pl-3 text-[#dfdbd2]">
        <button aria-label="Schließen" type="button">
          <Svg className="h-[15px] w-[15px]">
            <circle cx="12" cy="12" fill="#ee6a43" r="11.5" stroke="#7c3520" />
            <path d="M8 8l8 8M16 8l-8 8" stroke="#5c2413" strokeWidth="2.5" />
          </Svg>
        </button>
        <button aria-label="Maximieren" type="button">
          <Svg className="h-[15px] w-[15px]">
            <circle cx="12" cy="12" fill="#7c7a73" r="11.5" stroke="#35342f" />
            <rect height="9" stroke="#3c3b37" strokeWidth="2" width="9" x="7.5" y="7.5" />
          </Svg>
        </button>
        <h2 className="truncate pl-2 text-[14px] font-bold" id="dialog-title">
          Layereigenschaften - ne_10m_graticules_10 | Stil
        </h2>
      </header>
      <div className="flex min-h-0 flex-1">
        <DialogSidebar />
        <StylePage />
      </div>
    </div>
  );
}

const windowButtons = [
  { label: "Schließen", d: "M8 8l8 8M16 8l-8 8" },
  { label: "Minimieren", d: "M7 12h10" },
  { label: "Maximieren", d: "M8 8h8v8H8z" },
];

export default function App() {
  return (
    <div className="relative flex h-screen flex-col overflow-hidden border-l border-[#9b9a97] bg-[#f2f1f0] font-['Noto_Sans',sans-serif] text-[#4c4c4c]">
      <header className="flex h-[26px] shrink-0 items-center gap-[3px] bg-gradient-to-b from-[#33322f] to-[#42413c] pl-[11px] text-[#86837c]">
        {windowButtons.map(({ label, d }) => (
          <button aria-label={label} className="shrink-0" key={label} type="button">
            <Svg className="h-[15px] w-[15px]">
              <circle cx="12" cy="12" fill="#5f5d57" r="11.5" stroke="#2c2b28" />
              <path d={d} stroke="#2f2e2b" strokeWidth="2.5" />
            </Svg>
          </button>
        ))}
        <h1 className="truncate pl-2.5 text-[14px] font-bold">
          QGIS 2.2.0-Valmiera - Valmiera Test
        </h1>
      </header>
      <Toolbars />
      <main className="flex min-h-0 flex-1">
        <LayerToolbar />
        <LayerPanel />
        <div className="ml-[5px] min-w-0 flex-1 overflow-hidden pt-px">
          <MapCanvas />
        </div>
      </main>
      <footer className="flex h-6 shrink-0 items-center border-t border-[#cfcecb] text-[14px]">
        <div className="ml-[446px] flex shrink-0 items-center pt-1">
          <button aria-label="Ausdehnung umschalten" type="button">
            <Svg className="h-[17px] w-[17px]">
              <rect fill="#fafafa" height="23" rx="4" stroke="#aaa" width="23" x="0.5" y="0.5" />
              <path
                d="M5 4c4-2 5 5 1 5s-1 7 3 7 7 5 9 2M10 3c5 0 3 8 7 6s4 5 1 6-3 6-7 5M4 13l8 6M12 6l-3 10M16 13l-5-3M19 5l3-2"
                stroke="#111"
                strokeWidth="2.2"
              />
            </Svg>
          </button>
          <label className="pl-3 pr-3" htmlFor="coord">
            Koordinate:
          </label>
        </div>
        <input
          className="mt-3 h-6 w-full min-w-0 rounded-tl border border-r-0 border-[#aeada9] bg-white pl-[110px] shadow-inner"
          defaultValue="9.37,44.5"
          id="coord"
          type="text"
        />
      </footer>
      <LayerPropertiesDialog />
    </div>
  );
}
